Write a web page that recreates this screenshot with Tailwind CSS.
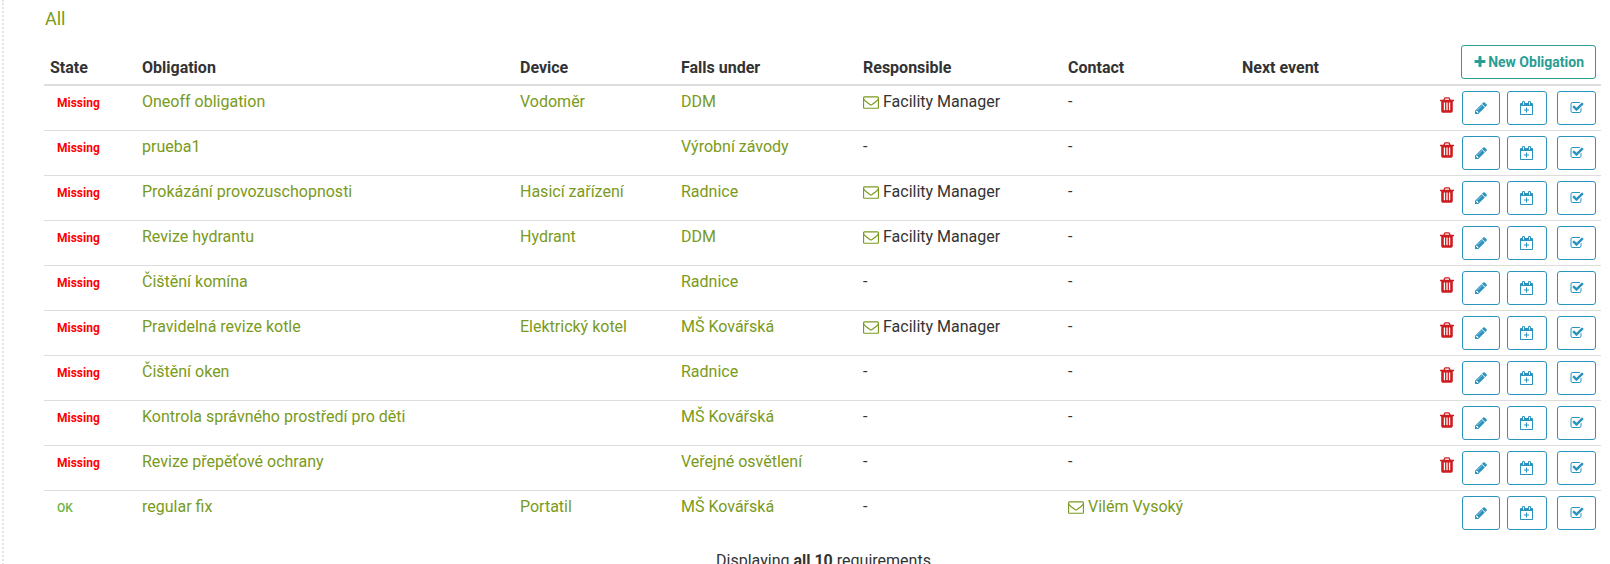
<!DOCTYPE html>
<html lang="en">
<head>
<meta charset="utf-8">
<title>Obligations</title>
<script src="https://cdn.jsdelivr.net/npm/@tailwindcss/browser@4"></script>
</head>
<body class="bg-white pl-[2px] font-[Roboto,sans-serif] text-base leading-[22px] text-[#333]">
<svg class="hidden" aria-hidden="true">
  <symbol id="trash" viewBox="0 0 1792 1792"><path d="M704 1376v-704q0-14-9-23t-23-9h-64q-14 0-23 9t-9 23v704q0 14 9 23t23 9h64q14 0 23-9t9-23zm256 0v-704q0-14-9-23t-23-9h-64q-14 0-23 9t-9 23v704q0 14 9 23t23 9h64q14 0 23-9t9-23zm256 0v-704q0-14-9-23t-23-9h-64q-14 0-23 9t-9 23v704q0 14 9 23t23 9h64q14 0 23-9t9-23zm-544-992h448l-48-117q-7-9-17-11h-317q-10 2-17 11zm928 32v64q0 14-9 23t-23 9h-96v948q0 83-47 143.500t-113 60.500h-832q-66 0-113-58.500t-47-141.500v-952h-96q-14 0-23-9t-9-23v-64q0-14 9-23t23-9h309l70-167q15-37 54-63t79-26h320q40 0 79 26t54 63l70 167h309q14 0 23 9t9 23z"/></symbol>
  <symbol id="pencil" viewBox="0 0 1792 1792"><path d="M491 1536l91-91-235-235-91 91v107h128v128h107zm523-928q0-22-22-22-10 0-17 7l-542 542q-7 7-7 17 0 22 22 22 10 0 17-7l542-542q7-7 7-17zm-54-192l416 416-832 832h-416v-416zm683 96q0 53-37 90l-166 166-416-416 166-165q36-38 90-38 53 0 91 38l235 234q37 39 37 91z"/></symbol>
  <symbol id="envelope" viewBox="0 0 1792 1792"><path d="M1664 1504v-768q-32 36-69 66-268 206-426 338-51 43-83 67t-86.500 48.500-102.500 24.500h-2q-48 0-102.500-24.500t-86.500-48.500-83-67q-158-132-426-338-37-30-69-66v768q0 13 9.500 22.500t22.500 9.500h1472q13 0 22.500-9.500t9.500-22.500zm0-1051v-24.500l-.5-13-3-12.500-5.500-9-9-7.500-14-2.500h-1472q-13 0-22.500 9.500t-9.500 22.500q0 168 147 284 193 152 401 317 6 5 35 29.500t46 37.500 44.500 31.500 50.500 27.500 43 9h2q20 0 43-9t50.500-27.500 44.500-31.500 46-37.500 35-29.500q208-165 401-317 54-43 100.500-115.500t46.500-131.500zm128-37v1088q0 66-47 113t-113 47h-1472q-66 0-113-47t-47-113v-1088q0-66 47-113t113-47h1472q66 0 113 47t47 113z"/></symbol>
  <symbol id="plus" viewBox="0 0 1792 1792"><path d="M1600 736v192q0 40-28 68t-68 28h-416v416q0 40-28 68t-68 28h-192q-40 0-68-28t-28-68v-416h-416q-40 0-68-28t-28-68v-192q0-40 28-68t68-28h416v-416q0-40 28-68t68-28h192q40 0 68 28t28 68v416h416q40 0 68 28t28 68z"/></symbol>
  <symbol id="check" viewBox="0 0 1792 1792"><path d="M1472 930v318q0 119-84.500 203.500t-203.500 84.500h-832q-119 0-203.500-84.500t-84.500-203.500v-832q0-119 84.500-203.500t203.500-84.500h832q63 0 117 25 15 7 18 23 3 17-9 29l-49 49q-10 10-23 10-3 0-9-2-23-6-45-6h-832q-66 0-113 47t-47 113v832q0 66 47 113t113 47h832q66 0 113-47t47-113v-254q0-13 9-22l64-64q10-10 23-10 6 0 12 3 20 8 20 29zm231-489l-814 814q-24 24-57 24t-57-24l-430-430q-24-24-24-57t24-57l110-110q24-24 57-24t57 24l263 263 647-647q24-24 57-24t57 24l110 110q24 24 24 57t-24 57z"/></symbol>
  <symbol id="calendar" viewBox="0 0 1792 1792"><path d="M1536 256q52 0 90 38t38 90v1280q0 52-38 90t-90 38h-1408q-52 0-90-38t-38-90v-1280q0-52 38-90t90-38h128v-96q0-66 47-113t113-47h64q66 0 113 47t47 113v96h384v-96q0-66 47-113t113-47h64q66 0 113 47t47 113v96h128zm-384-96v288q0 14 9 23t23 9h64q14 0 23-9t9-23v-288q0-14-9-23t-23-9h-64q-14 0-23 9t-9 23zm-768 0v288q0 14 9 23t23 9h64q14 0 23-9t9-23v-288q0-14-9-23t-23-9h-64q-14 0-23 9t-9 23zm1152 1504v-1024h-1408v1024h1408zm-640-576h224q14 0 23 9t9 23v64q0 14-9 23t-23 9h-224v224q0 14-9 23t-23 9h-64q-14 0-23-9t-9-23v-224h-224q-14 0-23-9t-9-23v-64q0-14 9-23t23-9h224v-224q0-14 9-23t23-9h64q14 0 23 9t9 23v224z"/></symbol>
</svg>
<main class="min-h-screen border-l-2 border-dotted border-[#e4e4e4] pt-2 pr-[9px] pl-10">
  <h2 class="h-8 pl-px text-lg leading-[22px]"><a href="#all" class="text-[#7a9a20]">All</a></h2>
  <table class="w-full table-fixed border-collapse text-left">
    <colgroup>
      <col class="w-[92px]"><col class="w-[378px]"><col class="w-[161px]"><col class="w-[182px]"><col class="w-[205px]"><col class="w-[174px]"><col>
      <col class="w-[180px]">
    </colgroup>
    <thead class="border-b-2 border-[#ddd]">
      <tr class="align-bottom">
        <th class="p-[5px] pl-1.5 font-bold">State</th>
        <th class="p-[5px] pl-1.5 font-bold">Obligation</th>
        <th class="p-[5px] pl-1.5 font-bold">Device</th>
        <th class="p-[5px] pl-1.5 font-bold">Falls under</th>
        <th class="p-[5px] pl-1.5 font-bold">Responsible</th>
        <th class="p-[5px] pl-1.5 font-bold">Contact</th>
        <th class="p-[5px] pl-1.5 font-bold">Next event</th>
        <td class="p-[5px]">
          <div class="flex justify-end">
            <button type="button" class="flex h-[34px] items-center gap-px rounded-[3px] border border-[#2a9d94] px-[11px] text-sm font-bold whitespace-nowrap text-[#2a9d94]"><svg class="size-3.5 fill-current" aria-hidden="true"><use href="#plus"/></svg>New Obligation</button>
          </div>
        </td>
      </tr>
    </thead>
    <tbody id="rows"></tbody>
  </table>
  <p class="mt-[15px] pl-[2px] text-center">Displaying <b>all 10</b> requirements</p>
</main>
<script>
const manager = 'Facility Manager';
const rows = [
  ['Oneoff obligation', 'Vodoměr', 'DDM', manager],
  ['prueba1', '', 'Výrobní závody'],
  ['Prokázání provozuschopnosti', 'Hasicí zařízení', 'Radnice', manager],
  ['Revize hydrantu', 'Hydrant', 'DDM', manager],
  ['Čištění komína', '', 'Radnice'],
  ['Pravidelná revize kotle', 'Elektrický kotel', 'MŠ Kovářská', manager],
  ['Čištění oken', '', 'Radnice'],
  ['Kontrola správného prostředí pro děti', '', 'MŠ Kovářská'],
  ['Revize přepěťové ochrany', '', 'Veřejné osvětlení'],
  ['regular fix', 'Portatil', 'MŠ Kovářská', '', 'Vilém Vysoký'],
];
const link = t => t ? `<a href="#item" class="text-[#7a9a20]">${t}</a>` : '';
const mail = `<svg class="size-4 fill-[#7a9a20]" aria-hidden="true"><use href="#envelope"/></svg>`;
const cell = c => `<td class="p-[5px] pl-1.5">${c}</td>`;
document.getElementById('rows').innerHTML = rows.map(([name, device, under, resp, contact]) => `
  <tr class="border-t border-[#ddd] align-top">
    ${cell(contact ? '<span class="block px-[7px] pt-px text-xs leading-[22px] font-medium text-[#6cb33f]">OK</span>' : '<span class="block px-[7px] pt-px text-xs leading-[22px] font-bold text-[#f00]">Missing</span>')}
    ${cell(link(name))}${cell(link(device))}${cell(link(under))}
    ${cell(resp ? `<span class="flex items-center gap-1"><a href="#mail" aria-label="Email ${resp}">${mail}</a>${resp}</span>` : '-')}
    ${cell(contact ? `<a href="#mail" class="flex items-center gap-1 text-[#7a9a20]">${mail}${contact}</a>` : '-')}
    <td></td>
    <td class="p-[5px]"><div class="flex justify-end">
      ${contact ? '' : '<button type="button" aria-label="Delete" class="mr-1.5 h-7"><svg class="size-[18px] fill-[#cc1c20]"><use href="#trash"/></svg></button>'}
      <button type="button" aria-label="Edit" class="mr-[7px] flex h-[34px] w-[38px] items-center justify-center rounded-[3px] border border-[#2c93bf]"><svg class="size-3.5 fill-[#2c93bf]"><use href="#pencil"/></svg></button>
      <button type="button" aria-label="Add event" class="mr-2.5 flex h-[34px] w-10 items-center justify-center rounded-[3px] border border-[#2c93bf]"><svg class="size-3.5 fill-[#2c93bf]"><use href="#calendar"/></svg></button>
      <button type="button" aria-label="Complete" class="flex h-[34px] w-[39px] items-center justify-center rounded-[3px] border border-[#2c93bf]"><svg class="size-3.5 fill-[#2c93bf]"><use href="#check"/></svg></button>
    </div></td>
  </tr>`).join('');
</script>
</body>
</html>
